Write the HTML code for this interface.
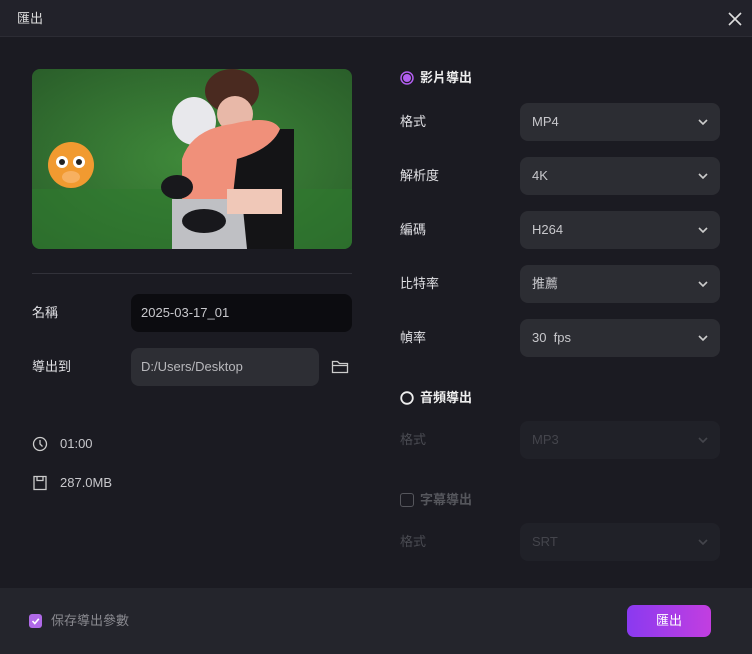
<!DOCTYPE html>
<html><head><meta charset="utf-8"><style>
*{box-sizing:border-box;margin:0;padding:0}
body{width:752px;height:654px;background:#1b1b22;font-family:"Liberation Sans","Noto Sans CJK TC",sans-serif;color:#e6e6ea;position:relative;overflow:hidden;font-size:13px;line-height:16px}
.abs{position:absolute}
.hdr{left:0;top:0;width:752px;height:37px;background:#22222a;border-bottom:1px solid #2c2c34}
.ftr{left:0;top:588px;width:752px;height:66px;background:#24252c}
.lbl{left:400px;font-size:13px;color:#e0e0e4}
.dd{left:520px;width:200px;height:38px;background:#2c2d33;border-radius:8px;padding-left:12px;line-height:38px;color:#c8c8cc;font-size:13px}
.dd svg{position:absolute;right:12px;top:15px}
.dis{background:#202128;color:#44454c}
.dlbl{color:#4a4b52}
</style></head><body>
<div class="abs hdr"><span class="abs" style="left:17px;top:11px;font-size:13px;color:#ddd">匯出</span>
<svg class="abs" style="left:728px;top:12px" width="14" height="14" viewBox="0 0 14 14"><path d="M1 1L13 13M13 1L1 13" stroke="#ddd" stroke-width="1.6"/></svg></div>

<svg class="abs" style="left:32px;top:69px;border-radius:8px" width="320" height="180" viewBox="0 0 320 180">
<defs><radialGradient id="g" cx="50%" cy="50%" r="70%"><stop offset="0" stop-color="#3f8a3a"/><stop offset="1" stop-color="#2a5e2a"/></radialGradient></defs>
<rect width="320" height="180" fill="url(#g)"/>
<rect x="0" y="120" width="320" height="60" fill="#2f7a2e" opacity=".6"/>
<rect x="200" y="60" width="62" height="120" fill="#141416"/>
<ellipse cx="200" cy="22" rx="27" ry="22" fill="#4a2a20"/>
<ellipse cx="203" cy="45" rx="18" ry="18" fill="#e8b8a8"/>
<ellipse cx="162" cy="52" rx="22" ry="24" fill="#e8e8ec"/>
<path d="M150 90 Q160 60 200 55 Q240 45 248 60 Q240 80 205 90 L200 135 L150 135Z" fill="#f0907a"/>
<path d="M140 130 L210 130 L215 180 L140 180Z" fill="#bfc0c4"/>
<rect x="195" y="120" width="55" height="25" fill="#f0c8b8"/>
<ellipse cx="172" cy="152" rx="22" ry="12" fill="#18181c"/>
<ellipse cx="145" cy="118" rx="16" ry="12" fill="#18181c"/>
<circle cx="39" cy="96" r="23" fill="#f19a30"/>
<circle cx="30" cy="93" r="6" fill="#fff"/><circle cx="47" cy="93" r="6" fill="#fff"/>
<circle cx="30" cy="93" r="3" fill="#222"/><circle cx="47" cy="93" r="3" fill="#222"/>
<ellipse cx="39" cy="108" rx="9" ry="6" fill="#f7b060"/>
</svg>
<div class="abs" style="left:32px;top:273px;width:320px;height:1px;background:#32323a"></div>

<span class="abs" style="left:32px;top:305px;color:#e0e0e4">名稱</span>
<div class="abs" style="left:131px;top:294px;width:221px;height:38px;background:#0c0c10;border-radius:8px;padding-left:10px;line-height:38px;color:#c8c8cc">2025-03-17_01</div>
<span class="abs" style="left:32px;top:359px;color:#e0e0e4">導出到</span>
<div class="abs" style="left:131px;top:348px;width:188px;height:38px;background:#2d2e34;border-radius:8px;padding-left:10px;line-height:38px;color:#b8b8bc">D:/Users/Desktop</div>
<svg class="abs" style="left:331px;top:359px" width="18" height="16" viewBox="0 0 18 16"><path d="M1.5 2.5h5l2 2h8v9h-15z M1.5 6.5h15" fill="none" stroke="#ccc" stroke-width="1.3"/></svg>

<svg class="abs" style="left:32px;top:436px" width="16" height="16" viewBox="0 0 16 16"><circle cx="8" cy="8" r="6.5" fill="none" stroke="#ccc" stroke-width="1.3"/><path d="M8 4v4l2.5 2.5" fill="none" stroke="#ccc" stroke-width="1.3"/></svg>
<span class="abs" style="left:60px;top:436px;color:#c8c8cc">01:00</span>
<svg class="abs" style="left:32px;top:475px" width="16" height="16" viewBox="0 0 16 16"><path d="M2 1.5h12v13h-12z M5 1.5v4h6v-4" fill="none" stroke="#ccc" stroke-width="1.3"/></svg>
<span class="abs" style="left:60px;top:475px;color:#c8c8cc">287.0MB</span>

<svg class="abs" style="left:400px;top:71px" width="14" height="14"><circle cx="7" cy="7" r="6" fill="none" stroke="#b25ef0" stroke-width="1.5"/><circle cx="7" cy="7" r="4" fill="#b25ef0"/></svg>
<span class="abs" style="left:420px;top:70px;font-weight:bold;color:#eee">影片導出</span>

<span class="abs lbl" style="top:114px">格式</span>
<div class="abs dd" style="top:103px">MP4<svg width="10" height="8"><path d="M1 2l4 4 4-4" fill="none" stroke="#ccc" stroke-width="1.6"/></svg></div>
<span class="abs lbl" style="top:168px">解析度</span>
<div class="abs dd" style="top:157px">4K<svg width="10" height="8"><path d="M1 2l4 4 4-4" fill="none" stroke="#ccc" stroke-width="1.6"/></svg></div>
<span class="abs lbl" style="top:222px">編碼</span>
<div class="abs dd" style="top:211px">H264<svg width="10" height="8"><path d="M1 2l4 4 4-4" fill="none" stroke="#ccc" stroke-width="1.6"/></svg></div>
<span class="abs lbl" style="top:276px">比特率</span>
<div class="abs dd" style="top:265px">推薦<svg width="10" height="8"><path d="M1 2l4 4 4-4" fill="none" stroke="#ccc" stroke-width="1.6"/></svg></div>
<span class="abs lbl" style="top:330px">幀率</span>
<div class="abs dd" style="top:319px">30&nbsp; fps<svg width="10" height="8"><path d="M1 2l4 4 4-4" fill="none" stroke="#ccc" stroke-width="1.6"/></svg></div>

<svg class="abs" style="left:400px;top:391px" width="14" height="14"><circle cx="7" cy="7" r="5.8" fill="none" stroke="#eee" stroke-width="1.8"/></svg>
<span class="abs" style="left:420px;top:390px;font-weight:bold;color:#eee">音頻導出</span>
<span class="abs lbl dlbl" style="top:432px">格式</span>
<div class="abs dd dis" style="top:421px">MP3<svg width="10" height="8"><path d="M1 2l4 4 4-4" fill="none" stroke="#44454c" stroke-width="1.6"/></svg></div>

<div class="abs" style="left:400px;top:493px;width:14px;height:14px;border:1.3px solid #55565c;border-radius:3px"></div>
<span class="abs" style="left:420px;top:492px;font-weight:bold;color:#55565c">字幕導出</span>
<span class="abs lbl dlbl" style="top:534px">格式</span>
<div class="abs dd dis" style="top:523px">SRT<svg width="10" height="8"><path d="M1 2l4 4 4-4" fill="none" stroke="#44454c" stroke-width="1.6"/></svg></div>

<div class="abs ftr">
<svg class="abs" style="left:29px;top:26px" width="13" height="14"><rect width="13" height="14" rx="3" fill="#b06ae8"/><path d="M3.5 7l2.3 2.5L9.8 4.8" fill="none" stroke="#fff" stroke-width="1.6"/></svg>
<span class="abs" style="left:51px;top:25px;color:#8a8a90">保存導出參數</span>
<div class="abs" style="left:627px;top:17px;width:84px;height:32px;border-radius:7px;background:linear-gradient(90deg,#8a3af0,#c23ee0);color:#fff;text-align:center;line-height:32px">匯出</div>
</div>
</body></html>
